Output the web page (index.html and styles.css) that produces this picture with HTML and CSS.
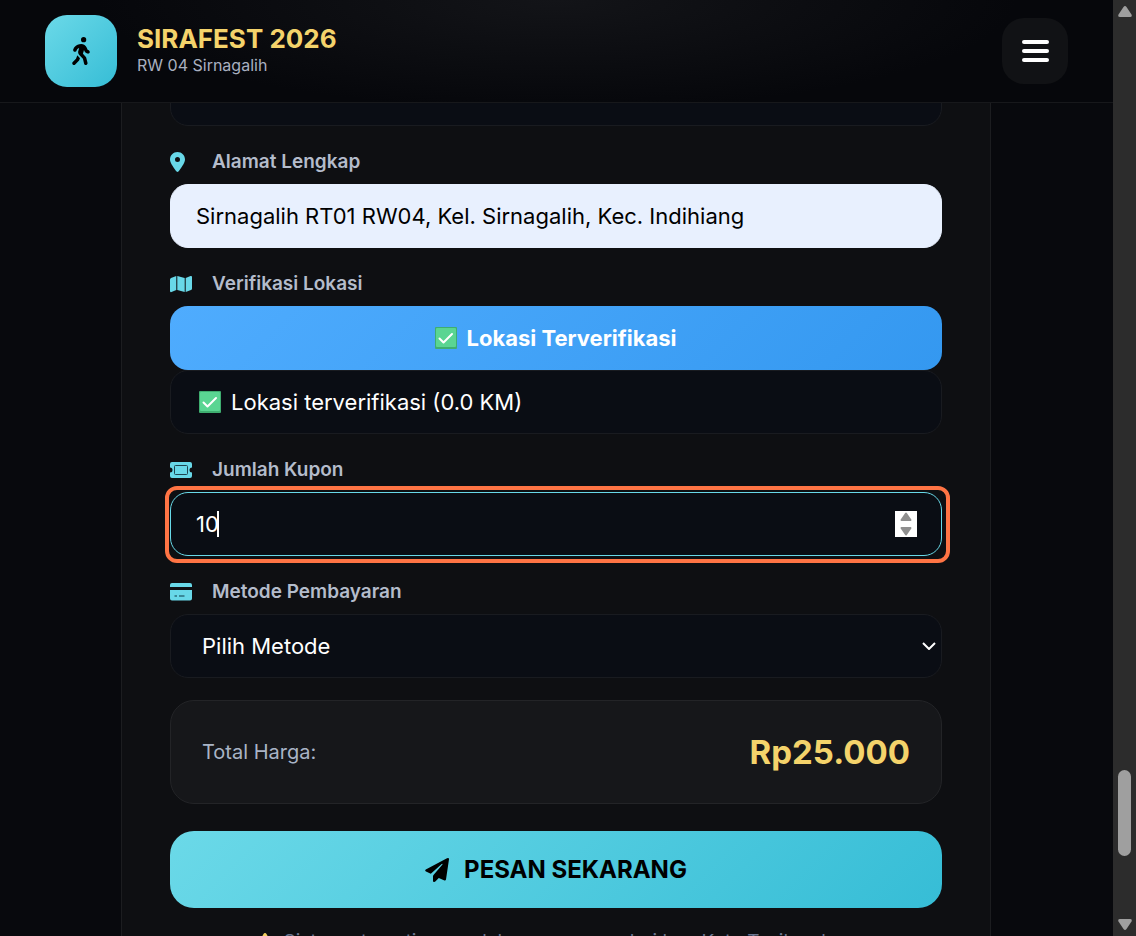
FILE: index.html
```html
<!DOCTYPE html>
<html lang="id">
  <head>
    <meta charset="UTF-8" />
    <meta name="viewport" content="width=device-width, initial-scale=1.0" />
    <title>SIRAFEST 2026</title>
    <link rel="stylesheet" href="styles.css">
  </head>
  <body>
    <!-- shared icons -->
    <svg class="sprite" aria-hidden="true">
      <symbol id="check" viewBox="0 0 22 22">
        <rect width="22" height="22" rx="1" fill="#3fae70" />
        <rect x="1" y="1" width="20" height="19" rx="1" fill="#5ad592" />
        <path d="M4.500 11.500l4 4L17 7" fill="none" stroke="#fff" stroke-width="2" stroke-linecap="round" stroke-linejoin="round" />
      </symbol>
    </svg>

    <div class="page">
      <header class="navbar">
        <a class="brand" href="#">
          <span class="logo">
            <svg viewBox="0 0 320 512" width="18" height="28" fill="#000"><path d="M160 48a48 48 0 1 1 96 0 48 48 0 1 1-96 0zM126.500 199.300c-1 .4-1.900 .8-2.900 1.200l-8 3.500c-16.400 7.300-29 21.200-34.700 38.200l-2.600 7.800c-5.600 16.800-23.700 25.800-40.500 20.200s-25.800-23.700-20.200-40.500l2.600-7.800c11.400-34.100 36.600-61.900 69.400-76.500l8-3.500c20.800-9.200 43.300-14 66.100-14 44.600 0 84.800 26.800 101.900 67.900L281 232.700l21.400 10.700c15.800 7.900 22.200 27.100 14.300 42.900s-27.100 22.200-42.900 14.300L247 287.300c-10.300-5.200-18.400-13.800-22.800-24.500l-9.600-23-19.300 65.500 49.500 54c5.400 5.900 9.200 13 11.200 20.800l23 92.100c4.300 17.100-6.100 34.500-23.300 38.800s-34.500-6.100-38.800-23.300l-22-88.100-70.700-77.100c-14.800-16.100-20.300-38.600-14.700-59.700l16.900-63.500zM68.700 398l25-62.400c2.100 3 4.500 5.800 7 8.600l40.700 44.400-14.500 36.200c-2.400 6-6 11.500-10.600 16.100l-61.700 61.700c-12.500 12.500-32.800 12.500-45.300 0s-12.500-32.800 0-45.300L68.700 398z" /></svg>
          </span>
          <span class="brand-text">
            <strong class="brand-name">SIRAFEST 2026</strong>
            <span class="brand-sub">RW 04 Sirnagalih</span>
          </span>
        </a>
        <button class="menu-btn" type="button" aria-label="Menu">
          <span class="bar"></span>
          <span class="bar"></span>
          <span class="bar"></span>
        </button>
      </header>

      <main class="content">
        <form class="card">
          <input class="control" type="tel" aria-label="Nomor WhatsApp" />

          <div class="field">
            <label class="label" for="alamat">
              <span class="icon"><svg viewBox="0 0 384 512" width="15" height="20"><path fill="#68d8e8" d="M215.700 499.200C267 435 384 279.400 384 192 384 86 298 0 192 0S0 86 0 192c0 87.400 117 243 168.300 307.200 12.300 15.300 35.100 15.300 47.400 0zM192 128a64 64 0 1 1 0 128 64 64 0 1 1 0-128z" /></svg></span>
              Alamat Lengkap
            </label>
            <input class="control filled" id="alamat" type="text" value="Sirnagalih RT01 RW04, Kel. Sirnagalih, Kec. Indihiang" />
          </div>

          <div class="field">
            <div class="label">
              <span class="icon"><svg viewBox="0 0 22 18" width="22" height="18" fill="#68d8e8"><path d="M0 4.500Q0 3.500 1 3L6.300 1V15L1.500 17Q0 17.500 0 16ZM7.300 1L14.700 3V17L7.300 15ZM15.700 3L20.500 1Q22 .5 22 2V13.500Q22 14.500 21 15L15.700 17Z" /></svg></span>
              Verifikasi Lokasi
            </div>
            <button class="verify-btn" type="button">
              <svg class="emoji"><use href="#check" /></svg>
              Lokasi Terverifikasi
            </button>
            <div class="control status">
              <svg class="emoji"><use href="#check" /></svg>
              Lokasi terverifikasi (0.0 KM)
            </div>
          </div>

          <div class="field">
            <label class="label" for="kupon">
              <span class="icon"><svg viewBox="0 0 22 16" width="22" height="16"><path fill="#68d8e8" d="M2 0H20Q22 0 22 2V5.500A2.500 2.500 0 0 0 22 10.500V14Q22 16 20 16H2Q0 16 0 14V10.500A2.500 2.500 0 0 0 0 5.500V2Q0 0 2 0Z" /><rect x="4.500" y="3.500" width="13" height="9" rx="1" fill="#68d8e8" stroke="#1d4450" /></svg></span>
              Jumlah Kupon
            </label>
            <div class="number-box">
              <input class="control active" id="kupon" type="number" value="10" />
              <span class="caret"></span>
              <span class="spinner">
                <svg viewBox="0 0 22 26" width="22" height="26" fill="#8f8f8f" stroke="#8f8f8f" stroke-width="2" stroke-linejoin="round"><path d="M11 2.500L15.500 9H6.500ZM11 23.500L15.500 17H6.500Z" /></svg>
              </span>
              <span class="highlight"></span>
            </div>
          </div>

          <div class="field">
            <label class="label" for="metode">
              <span class="icon"><svg viewBox="0 0 22 18" width="22" height="18"><path fill="#68d8e8" d="M2 0H20Q22 0 22 2V4H0V2Q0 0 2 0ZM0 7H22V15.500Q22 17.500 20 17.500H2Q0 17.500 0 15.500Z" /><path d="M4.500 13H7M9 13H14.500" stroke="#2b6f7e" stroke-width="1.500" /></svg></span>
              Metode Pembayaran
            </label>
            <div class="select-box">
              <select class="control" id="metode">
                <option>Pilih Metode</option>
              </select>
              <svg class="chevron" viewBox="0 0 14 8" width="14" height="8"><path d="M1 1L7 7L13 1" fill="none" stroke="#fff" stroke-width="2" /></svg>
            </div>
          </div>

          <div class="total">
            <span class="total-label">Total Harga:</span>
            <span class="total-price">Rp25.000</span>
          </div>

          <button class="submit-btn" type="submit">
            <svg viewBox="0 0 24 24" width="24" height="24" fill="#000"><path d="M23 0Q24.200 0 24 1.300L21 21.500Q20.700 22.800 19.500 22.500L13.800 20L10.300 23.500Q8.500 24.800 8 23V18.500Q8 17.500 8.700 16.700L17.500 6.500Q17.700 5.500 16.700 6L5.800 15.800L1 13.500Q-.5 12.500 .8 11.500L22 .3Q22.500 0 23 0Z" /></svg>
            PESAN SEKARANG
          </button>

          <p class="note">
            <svg viewBox="0 0 20 18" width="20" height="18" fill="#f4d160"><path d="M10 0Q11 0 11.500 1L19.500 15.500Q20.500 18 18 18H2Q-.5 18 .5 15.500L8.500 1Q9 0 10 0Z" /></svg>
            Sistem otomatis menolak pemesanan dari luar Kota Tasikmalaya
          </p>
        </form>
      </main>
    </div>

    <!-- scrollbar -->
    <div class="scrollbar">
      <svg viewBox="0 0 14 11" width="14" height="11" fill="#9f9f9f"><path d="M5.500 1Q7-1 8.500 1L13.500 8.500Q14.500 11 12 11H2Q-.5 11 .5 8.500Z" /></svg>
      <div class="track"><div class="thumb"></div></div>
      <svg viewBox="0 0 14 11" width="14" height="11" fill="#9f9f9f"><path d="M5.500 10Q7 12 8.500 10L13.500 2.500Q14.500 0 12 0H2Q-.5 0 .5 2.500Z" /></svg>
    </div>
  </body>
</html>
```
FILE: styles.css
```css
* {
  margin: 0;
  padding: 0;
  box-sizing: border-box;
}

body {
  display: flex;
  height: 100vh;
  overflow: hidden;
  background-color: #08090d;
  color: #fff;
  font-family: Inter, "Liberation Sans", sans-serif;
}

button,
input,
select {
  font-family: inherit;
}

svg {
  display: block;
  flex-shrink: 0;
}

.sprite {
  position: absolute;
  width: 0;
  height: 0;
}

.page {
  display: flex;
  flex: 1;
  flex-direction: column;
  min-width: 0;
}

/* header */
.navbar {
  display: flex;
  flex-shrink: 0;
  align-items: center;
  justify-content: space-between;
  padding: 15px 45px;
  border-bottom: 1px solid #17181b;
  background: radial-gradient(ellipse 460px 110px at 50% 0, #131418, transparent), #06070b;
}

.brand {
  display: flex;
  align-items: center;
  gap: 20px;
  color: inherit;
  text-decoration: none;
}

.logo {
  display: flex;
  align-items: center;
  justify-content: center;
  width: 72px;
  height: 72px;
  border-radius: 22px;
  background: linear-gradient(135deg, #6bd9e8, #36bdd6);
}

.brand-text {
  display: flex;
  flex-direction: column;
  padding-bottom: 2px;
}

.brand-name {
  color: #f4d36b;
  font-size: 26px;
  font-weight: 700;
  line-height: 30px;
}

.brand-sub {
  color: #a9b0c0;
  font-size: 16px;
  line-height: 22px;
}

.menu-btn {
  display: flex;
  flex-direction: column;
  align-items: center;
  justify-content: center;
  gap: 5px;
  width: 66px;
  height: 66px;
  border: none;
  border-radius: 22px;
  background-color: #111215;
}

.bar {
  width: 27px;
  height: 4px;
  border-radius: 2px;
  background-color: #fff;
}

/* form */
.content {
  flex: 1;
  min-height: 0;
  padding-right: 1px;
  overflow: hidden;
}

.card {
  max-width: 870px;
  margin: -90px auto 0;
  padding: 48px;
  border: 1px solid #1c1d20;
  background-color: #0e0f12;
}

.field {
  margin-top: 22px;
}

.label {
  display: flex;
  align-items: center;
  margin-bottom: 8px;
  color: #b4bccb;
  font-size: 19px;
  font-weight: 600;
  line-height: 28px;
}

.icon {
  width: 42px;
}

.control {
  display: block;
  width: 100%;
  height: 64px;
  padding: 0 25px;
  border: 1px solid #191b20;
  border-radius: 18px;
  outline: none;
  background-color: #0a0d14;
  color: #fff;
  font-size: 22px;
}

.filled {
  border-color: #e8f0fe;
  background-color: #e8f0fe;
  color: #000;
}

.verify-btn {
  display: flex;
  align-items: center;
  justify-content: center;
  gap: 9px;
  width: 100%;
  height: 64px;
  border: none;
  border-radius: 18px;
  background: linear-gradient(135deg, #4facfe, #3498f0);
  color: #fff;
  font-size: 22px;
  font-weight: 700;
}

.status {
  display: flex;
  align-items: center;
  gap: 10px;
  padding: 0 28px;
}

.emoji {
  width: 22px;
  height: 22px;
}

.number-box,
.select-box {
  position: relative;
}

.active {
  border-color: #68d8e8;
  appearance: textfield;
}

.active::-webkit-inner-spin-button {
  appearance: none;
}

.caret {
  position: absolute;
  top: 19px;
  left: 47px;
  width: 2px;
  height: 26px;
  background-color: #fff;
}

.spinner {
  position: absolute;
  top: 19px;
  right: 25px;
  background-color: #fff;
}

.highlight {
  position: absolute;
  inset: -6px -8px -7px -5px;
  border: 4px solid #ff7444;
  border-radius: 12px;
  pointer-events: none;
}

select.control {
  padding: 0 31px;
  appearance: none;
}

.chevron {
  position: absolute;
  top: 28px;
  right: 6px;
  pointer-events: none;
}

.total {
  display: flex;
  align-items: center;
  justify-content: space-between;
  height: 104px;
  margin-top: 22px;
  padding: 0 31px;
  border: 1px solid #232427;
  border-radius: 24px;
  background-color: #16171a;
}

.total-label {
  color: #a9b4c6;
  font-size: 20px;
}

.total-price {
  color: #f4d36b;
  font-size: 33px;
  font-weight: 700;
}

.submit-btn {
  display: flex;
  align-items: center;
  justify-content: center;
  gap: 15px;
  width: 100%;
  height: 77px;
  margin-top: 27px;
  border: none;
  border-radius: 24px;
  background: linear-gradient(135deg, #6bd9e8, #36bdd6);
  color: #000;
  font-size: 24px;
  font-weight: 700;
}

.note {
  display: flex;
  align-items: center;
  justify-content: center;
  gap: 9px;
  margin-top: 22px;
  color: #6b7690;
  font-size: 19px;
  line-height: 24px;
  white-space: nowrap;
}

/* scrollbar */
.scrollbar {
  display: flex;
  flex-direction: column;
  align-items: center;
  width: 23px;
  padding: 6px 0;
  background-color: #2c2c2c;
}

.track {
  display: flex;
  flex: 1;
  flex-direction: column;
  justify-content: flex-end;
  padding-bottom: 63px;
}

.thumb {
  width: 13px;
  height: 86px;
  border-radius: 7px;
  background-color: #9f9f9f;
}
```
